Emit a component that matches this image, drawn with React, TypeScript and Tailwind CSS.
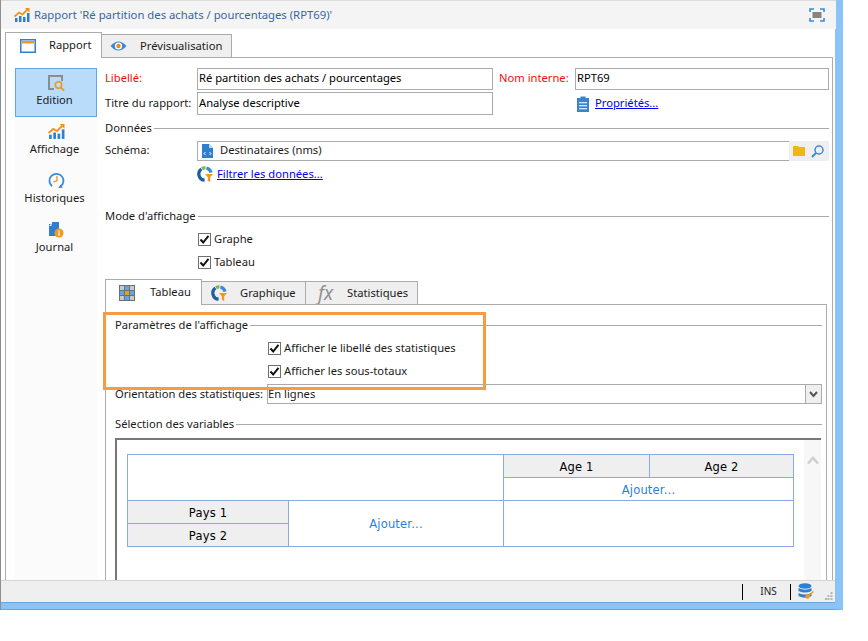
import React from 'react';

const ChartIcon = ({ size = 16 }: { size?: number }) => (
  <svg width={size} height={size} viewBox="0 0 16 16">
    <rect x="1" y="11" width="2.5" height="4" fill="#2f7fd0" />
    <rect x="5" y="9" width="2.5" height="6" fill="#2f7fd0" />
    <rect x="9" y="10" width="2.5" height="5" fill="#2f7fd0" />
    <rect x="13" y="6" width="2.5" height="9" fill="#2f7fd0" />
    <path d="M0.5 9.5 L5 5.5 L8.5 7.5 L13.5 2.5" stroke="#f0931e" strokeWidth="1.8" fill="none" />
    <path d="M11 1 H15.5 V5.5 Z" fill="#f0931e" />
  </svg>
);

const EditionIcon = () => (
  <svg width="17" height="17" viewBox="0 0 17 17">
    <path d="M14 6 V1 H1 V14 H6" stroke="#8c8c8c" strokeWidth="2" fill="none" />
    <circle cx="10.5" cy="10" r="3.2" stroke="#ef9a1e" strokeWidth="1.6" fill="none" />
    <path d="M12.8 12.4 L16 15.6" stroke="#ef9a1e" strokeWidth="2" />
  </svg>
);

const ClockIcon = () => (
  <svg width="17" height="17" viewBox="0 0 17 17">
    <path d="M4 14.2 A7 7 0 1 1 12.5 14.5" stroke="#3a8ad8" strokeWidth="1.8" fill="none" />
    <path d="M12.6 12.6 L10.2 16 L14.8 15.8 Z" fill="#3a8ad8" />
    <path d="M9 4 V8.6 L5.4 10.2" stroke="#ef9a1e" strokeWidth="1.4" fill="none" />
  </svg>
);

const JournalIcon = () => (
  <svg width="16" height="17" viewBox="0 0 16 17">
    <path d="M1 3 L4 3 L4 1 H11 V15 H1 Z" fill="#2f7fd0" />
    <path d="M1 5 L3.5 5 L3.5 2.5 Z" fill="#fff" />
    <circle cx="11" cy="12" r="4.5" fill="#ef9a1e" />
    <rect x="10.3" y="9.5" width="1.4" height="1.2" fill="#fff" />
    <rect x="10.3" y="11.4" width="1.4" height="3.2" fill="#fff" />
  </svg>
);

const RingIcon = () => (
  <svg width="16" height="16" viewBox="0 0 16 16">
    <path d="M4.4 3 A6.2 6.2 0 0 0 7.6 14.2" stroke="#1b5f9e" strokeWidth="3.2" fill="none" />
    <path d="M5 2.6 A6.2 6.2 0 0 1 8.4 1.8" stroke="#7ab648" strokeWidth="3.2" fill="none" />
    <path d="M9.4 2 A6.2 6.2 0 0 1 14 6.6" stroke="#3a8ad8" strokeWidth="3.2" fill="none" />
    <path d="M8 8 H16 L13.2 11.2 V16 L10.8 14.8 V11.2 Z" fill="#ef9a1e" />
  </svg>
);

const GridIcon = () => (
  <svg width="16" height="16" viewBox="0 0 16 16">
    <rect width="16" height="16" fill="#6f6f6f" />
    {[1, 6, 11].map((x) =>
      [1, 6, 11].map((y) => (
        <rect key={`${x}-${y}`} x={x} y={y} width="4" height="4" fill={x === 6 && y === 6 ? '#ef9a1e' : x === 6 || y === 6 ? '#5ba7e8' : '#c9c9c9'} />
      )),
    )}
  </svg>
);

const Check = () => (
  <span className="w-[13px] h-[13px] border border-[#707070] bg-white flex items-center justify-center shrink-0">
    <svg width="11" height="11" viewBox="0 0 11 11">
      <path d="M1.5 5.5 L4.2 8.5 L9.5 1.8" stroke="#111" strokeWidth="2" fill="none" />
    </svg>
  </span>
);

const CheckRow = ({ label, left, className }: { label: string; left: string; className: string }) => (
  <div className={`flex items-center gap-[3px] h-[14px] ${left} ${className}`}>
    <Check />
    <span>{label}</span>
  </div>
);

const Legend = ({ label, className }: { label: string; className: string }) => (
  <div className={`flex items-center h-[16px] ${className}`}>
    <span className="pr-[2px]">{label}</span>
    <div className="flex-1 h-px bg-[#a9a9a9]" />
  </div>
);

const Field = ({ value, className }: { value: string; className: string }) => (
  <div className={`border border-[#ababab] bg-white pl-[1px] flex items-center text-black ${className}`}>{value}</div>
);

const SideItem = ({ icon, label, active }: { icon: React.ReactNode; label: string; active?: boolean }) => (
  <div className={`h-[49px] flex flex-col items-center ${active ? 'bg-[#b9dcfb] border border-[#5ba7e8] pt-[6px]' : 'pt-[6px]'}`}>
    {icon}
    <span className={`mr-[3px] leading-[16px] ${active ? '' : 'mt-[1px]'}`}>{label}</span>
  </div>
);

const Cell = ({ children, className }: { children?: React.ReactNode; className: string }) => (
  <div className={`flex items-center justify-center pt-[3px] border-[#8aaae6] ${className}`}>{children}</div>
);

export default function App() {
  return (
    <div className="w-[868px] h-[641px] bg-white overflow-hidden text-[11.2px] text-[#1a1a1a] font-['Noto_Sans',sans-serif]">
      <div className="w-[843px] h-[610px] flex flex-col border-l border-l-[#8a8f96] border-r-[8px] border-r-[#8ac3f8] border-b border-b-[#6fa3d4]">
        {/* title bar */}
        <div className="h-[29px] shrink-0 bg-[#f4f4f4] border-t border-t-[#dcdcdc] flex items-center pl-[13px] pr-[11px] mr-[-1px]">
          <ChartIcon />
          <span className="ml-[4px] text-[11.3px] text-[#34679f]">Rapport 'Ré partition des achats / pourcentages (RPT69)'</span>
          <svg className="ml-auto" width="16" height="14" viewBox="0 0 16 14">
            <path d="M1 4 V1 H5 M11 1 H15 V4 M15 10 V13 H11 M5 13 H1 V10" stroke="#3a8ad8" strokeWidth="1.6" fill="none" />
            <rect x="3.5" y="4" width="9" height="6" fill="#858585" />
          </svg>
        </div>

        {/* main tabs */}
        <div className="h-[28px] shrink-0 pl-[4px] flex items-end">
          <div className="w-[97px] h-[26px] shrink-0 bg-white border border-b-0 border-[#ababab] flex items-center pl-[14px] relative top-px z-10">
            <svg width="16" height="14" viewBox="0 0 16 14">
              <rect x="0.75" y="0.75" width="14.5" height="12.5" fill="#fff" stroke="#2f7fd0" strokeWidth="1.5" />
              <rect x="2" y="2" width="12" height="2.5" fill="#ef9a1e" />
            </svg>
            <span className="ml-[13px]">Rapport</span>
          </div>
          <div className="w-[130px] h-[23px] shrink-0 bg-[#efefef] border border-b-0 border-l-0 border-[#ababab] flex items-center pl-[8px]">
            <svg width="17" height="12" viewBox="0 0 17 12">
              <path d="M0.5 6 Q8.5 -3 16.5 6 Q8.5 15 0.5 6 Z" fill="#3a8ad8" />
              <circle cx="8.5" cy="6" r="3.6" fill="#fff" />
              <circle cx="8.5" cy="6" r="2.2" fill="#e98a15" />
            </svg>
            <span className="ml-[13px]">Prévisualisation</span>
          </div>
        </div>

        {/* outer panel */}
        <div className="flex-1 min-h-0 ml-[4px] mr-[2px] border border-b-0 border-[#ababab] flex overflow-hidden">
          <div className="w-[82px] shrink-0 ml-[9px] mt-[10px] bg-[#fbfbfb]">
            <SideItem active icon={<EditionIcon />} label="Edition" />
            <SideItem icon={<ChartIcon size={17} />} label="Affichage" />
            <SideItem icon={<ClockIcon />} label="Historiques" />
            <SideItem icon={<JournalIcon />} label="Journal" />
          </div>

          <div className="flex-1 min-w-0 ml-[8px] pt-[10px] flex flex-col relative">
            <div className="flex items-center h-[22px] pr-[3px]">
              <span className="w-[92px] mb-[2px] text-[#f20d0d]">Libellé:</span>
              <Field value="Ré partition des achats / pourcentages" className="w-[296px] h-[22px] pb-[2px]" />
              <span className="ml-[6px] mb-[2px] w-[76px] text-[#f20d0d]">Nom interne:</span>
              <Field value="RPT69" className="flex-1 h-[22px] pb-[2px]" />
            </div>
            <div className="flex items-center h-[23px] mt-[2px]">
              <span className="w-[92px]">Titre du rapport:</span>
              <Field value="Analyse descriptive" className="w-[296px] h-[23px]" />
              <svg className="ml-[84px]" width="12" height="16" viewBox="0 0 12 16">
                <path d="M0 2 H3.5 V0.5 H8.5 V2 H12 V16 H0 Z" fill="#3a84cf" />
                <rect x="2" y="6" width="8" height="1.3" fill="#d7e8f8" />
                <rect x="2" y="9" width="8" height="1.3" fill="#d7e8f8" />
                <rect x="2" y="12" width="8" height="1.3" fill="#d7e8f8" />
              </svg>
              <a className="ml-[6px] text-[#0000ee] underline">Propriétés...</a>
            </div>

            <Legend label="Données" className="mt-[5px] mr-[3px]" />
            <div className="flex items-center h-[20px] mt-[5px]">
              <span className="w-[92px] mb-[2px]">Schéma:</span>
              <div className="flex-1 h-[20px] border border-[#ababab] border-r-0 flex items-center pl-[4px]">
                <svg width="11" height="14" viewBox="0 0 11 14">
                  <path d="M0 0 H7 L11 4 V14 H0 Z" fill="#2f7fd0" />
                  <path d="M7 0 V4 H11 Z" fill="#bcd9f3" />
                  <path d="M3.5 8 L2 9.5 L3.5 11 M7.5 8 L9 9.5 L7.5 11" stroke="#fff" strokeWidth="1" fill="none" />
                </svg>
                <span className="ml-[7px] mb-[2px]">Destinataires (nms)</span>
              </div>
              <div className="w-[40px] h-[20px] mr-[3px] bg-[#efefef] flex items-center pl-[4px] gap-[6px]">
                <svg width="12" height="10" viewBox="0 0 12 10">
                  <path d="M0 0 H5 L6 1 H12 V10 H0 Z" fill="#eeb80f" />
                  <rect y="1" width="12" height="1" fill="#f5a94a" />
                </svg>
                <svg width="13" height="13" viewBox="0 0 13 13">
                  <circle cx="8" cy="5" r="4" stroke="#3a8ad8" strokeWidth="1.5" fill="none" />
                  <path d="M5 8 L1 12" stroke="#3a8ad8" strokeWidth="2" />
                </svg>
              </div>
            </div>
            <div className="flex items-center h-[16px] mt-[5px] ml-[92px]">
              <RingIcon />
              <a className="ml-[4px] text-[#0000ee] underline">Filtrer les données...</a>
            </div>

            <Legend label="Mode d'affichage" className="mt-[26px] mr-[3px]" />
            <CheckRow label="Graphe" left="ml-[93px]" className="mt-[8px]" />
            <CheckRow label="Tableau" left="ml-[93px]" className="mt-[9px]" />

            {/* inner tabs */}
            <div className="h-[25px] mt-[10px] flex items-end shrink-0">
              <div className="w-[97px] h-[26px] bg-white border border-b-0 border-[#ababab] flex items-center pl-[13px] relative top-px z-10">
                <GridIcon />
                <span className="ml-[15px]">Tableau</span>
              </div>
              <div className="w-[104px] h-[23px] bg-[#efefef] border border-b-0 border-l-0 border-[#ababab] flex items-center pl-[9px]">
                <RingIcon />
                <span className="ml-[13px]">Graphique</span>
              </div>
              <div className="w-[112px] h-[23px] bg-[#efefef] border border-b-0 border-l-0 border-[#ababab] flex items-center pl-[12px]">
                <span className="w-[15px] italic text-[19px] text-[#8f8f8f] leading-none">fx</span>
                <span className="ml-[14px]">Statistiques</span>
              </div>
            </div>

            {/* inner panel */}
            <div className="flex-1 min-h-0 border-l border-r border-t border-[#ababab] pl-[9px] pr-[4px] mr-[5px]">
              <Legend label="Paramètres de l'affichage" className="mt-[12px]" />
              <CheckRow label="Afficher le libellé des statistiques" left="ml-[153px]" className="mt-[8px]" />
              <CheckRow label="Afficher les sous-totaux" left="ml-[153px]" className="mt-[9px]" />
              <div className="flex items-center h-[20px] mt-[6px]">
                <span className="w-[152px] whitespace-nowrap">Orientation des statistiques:</span>
                <div className="flex-1 h-[20px] border border-[#ababab] flex items-center">
                  <span className="flex-1">En lignes</span>
                  <div className="w-[16px] h-full bg-[#efefef] border-l border-l-[#ababab] flex items-center justify-center">
                    <svg width="9" height="7" viewBox="0 0 9 7">
                      <path d="M1 1 L4.5 5 L8 1" stroke="#555" strokeWidth="2" fill="none" />
                    </svg>
                  </div>
                </div>
              </div>
              <Legend label="Sélection des variables" className="mt-[12px]" />

              {/* variable selection box */}
              <div className="h-[200px] mt-[6px] border-t-2 border-l-2 border-[#777] flex mr-[1px]">
                <div className="flex-1 pl-[10px] pt-[14px]">
                  <div className="w-[667px] border border-[#8aaae6] font-['DejaVu_Sans',sans-serif] text-[11.5px] tracking-[0.2px] text-black flex flex-col">
                    <div className="flex h-[46px]">
                      <Cell className="w-[376px] border-r border-b" />
                      <div className="flex-1 flex flex-col">
                        <div className="flex h-[23px]">
                          <Cell className="w-[146px] bg-[#efefef] border-r border-b">Age 1</Cell>
                          <Cell className="flex-1 bg-[#efefef] border-b">Age 2</Cell>
                        </div>
                        <Cell className="h-[23px] border-b text-[#1f7fe0]">Ajouter...</Cell>
                      </div>
                    </div>
                    <div className="flex h-[45px]">
                      <div className="w-[161px] flex flex-col border-r border-[#8aaae6]">
                        <Cell className="h-[23px] bg-[#efefef] border-b">Pays 1</Cell>
                        <Cell className="flex-1 bg-[#efefef]">Pays 2</Cell>
                      </div>
                      <Cell className="w-[215px] border-r text-[#1f7fe0]">Ajouter...</Cell>
                      <div className="flex-1" />
                    </div>
                  </div>
                </div>
                <div className="w-[17px] bg-[#f7f7f7] flex justify-center pt-[16px]">
                  <svg width="12" height="9" viewBox="0 0 12 9">
                    <path d="M1 7.5 L6 2 L11 7.5" stroke="#cfcfcf" strokeWidth="2.6" fill="none" />
                  </svg>
                </div>
              </div>
            </div>

            {/* orange highlight over the screenshot */}
            <div className="absolute left-[-2px] top-[254px] w-[383px] h-[78px] border-[3px] border-[#f79a42] pointer-events-none" />
          </div>
        </div>

        {/* status bar */}
        <div className="h-[22px] shrink-0 bg-[#efefef] border-t border-t-[#d5d5d5] flex items-center justify-end text-[10px]">
          <div className="w-px h-[16px] bg-black" />
          <span className="w-[47px] pl-[4px] text-center">INS</span>
          <div className="w-px h-[16px] bg-black" />
          <svg className="ml-[7px]" width="16" height="17" viewBox="0 0 16 17">
            <ellipse cx="7" cy="3" rx="6.5" ry="2.8" fill="#2f7fd0" />
            <path d="M0.5 5 Q7 8.5 13.5 5 V8 Q7 11 0.5 8 Z" fill="#2f7fd0" />
            <path d="M0.5 10 Q7 13 13.5 10 V13 Q7 16.5 0.5 13 Z" fill="#2f7fd0" />
            <circle cx="9.5" cy="13.5" r="2.2" fill="#ef9a1e" />
            <path d="M10.5 12.5 L15.5 8.5" stroke="#ef9a1e" strokeWidth="1.6" />
          </svg>
          <svg className="ml-[11px] mr-[2px] self-end mb-[2px]" width="8" height="8" viewBox="0 0 8 8">
            <path d="M5.5 0 h2 v2 h-2 z M2.5 3 h2 v2 h-2 z M5.5 3 h2 v2 h-2 z M0 6 h2 v2 h-2 z M2.5 6 h2 v2 h-2 z M5.5 6 h2 v2 h-2 z" fill="#b5b5b5" />
          </svg>
        </div>
        <div className="h-[7px] shrink-0 bg-[#8ac3f8] border-t border-t-[#6fa3d4]" />
      </div>
    </div>
  );
}
